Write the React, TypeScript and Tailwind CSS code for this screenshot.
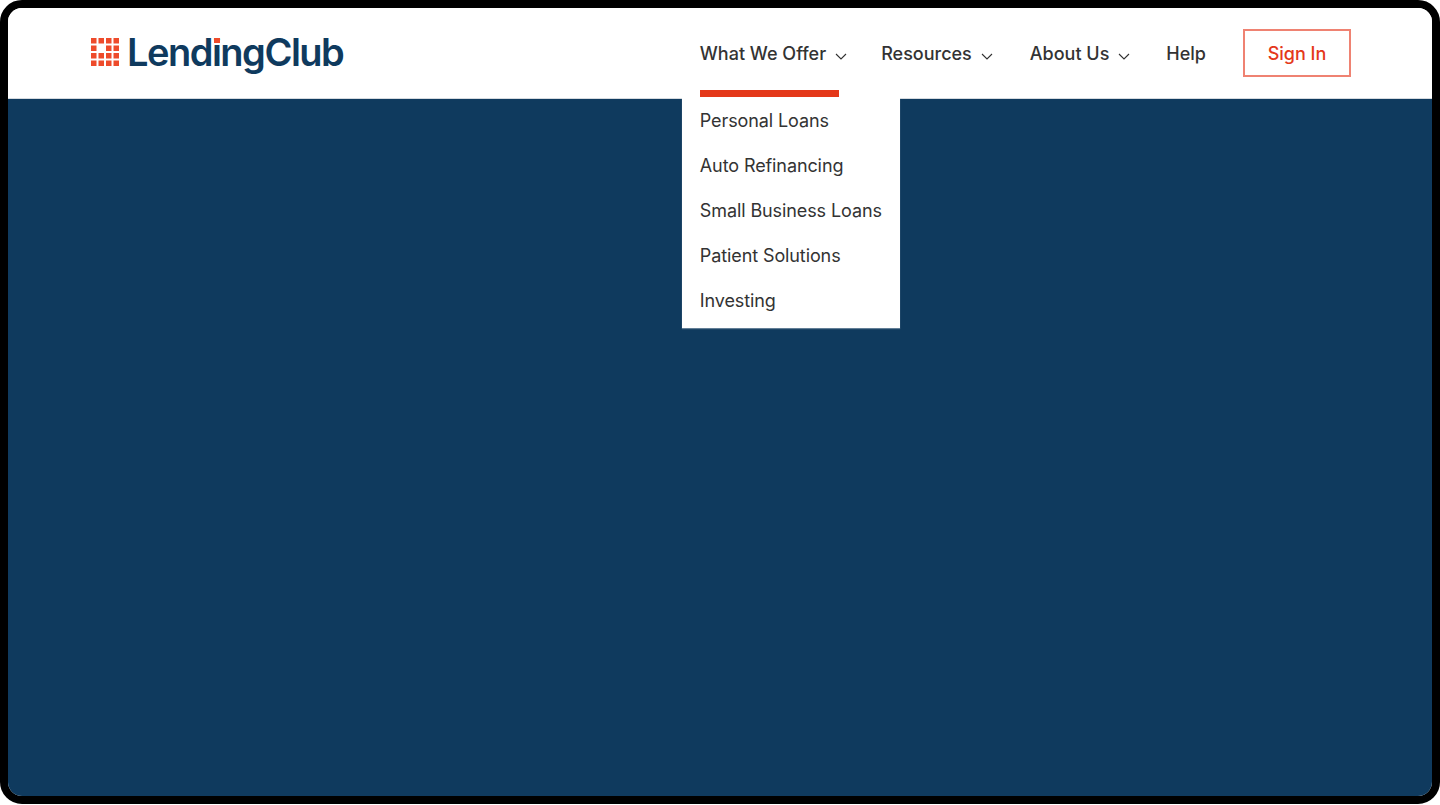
import React from "react";

const menuItems = [
  "Personal Loans",
  "Auto Refinancing",
  "Small Business Loans",
  "Patient Solutions",
  "Investing",
];

// 4x4 grid mark, the second row has a gap in the middle
const LogoMark = () => {
  const cells: [number, number][] = [];
  for (let r = 0; r < 4; r++) {
    for (let c = 0; c < 4; c++) {
      if (r === 1 && c === 1) continue;
      cells.push([c, r]);
    }
  }
  return (
    <svg width="28" height="28" viewBox="0 0 28 28" className="shrink-0">
      {cells.map(([c, r]) => (
        <rect
          key={`${c}-${r}`}
          x={c * 7.5}
          y={r * 7.5}
          width="5.5"
          height="5.5"
          fill="#EE4B2B"
        />
      ))}
    </svg>
  );
};

const Chevron = () => (
  <svg width="12" height="7" viewBox="0 0 12 7" fill="none" className="ml-[9px] mt-[6px]">
    <path d="M1 1l5 5 5-5" stroke="#333" strokeWidth="1.1" />
  </svg>
);

export default function App() {
  return (
    <div className="h-[804px] bg-white font-['Inter',sans-serif]">
      <div className="h-full flex flex-col overflow-hidden border-8 border-black rounded-[22px]">
        <header className="relative z-10 h-[91px] shrink-0 flex items-center justify-between pl-[83px] pr-[81px] bg-white border-b border-[#d5dadf]">
          <div className="relative flex items-center gap-2 -mt-[2px]">
            <LogoMark />
            <span className="text-[38px] leading-none font-semibold tracking-[-1.5px] text-[#0F3A5E]">
              LendingClub
            </span>
            {/* red dot of the i */}
            <span className="absolute left-[123px] top-[-1px] w-[6px] h-[11px] border-t-[6px] border-white bg-[#EE4B2B]" />
          </div>

          <nav className="flex items-center text-[18px] font-medium text-[#333]">
            <div className="relative flex items-center">
              <span>What We Offer</span>
              <Chevron />
              <div className="absolute left-0 top-[50px] w-[139px] h-[7px] bg-[#E4381A] z-10" />
              <ul className="absolute left-[-18px] top-[57px] w-[218px] pt-[1px] pb-[5px] bg-white font-normal tracking-[-0.1px] shadow-[0_1px_1px_rgba(255,255,255,0.35)]">
                {menuItems.map((item) => (
                  <li key={item} className="h-[45px] pl-[18px] flex items-center whitespace-nowrap">
                    {item}
                  </li>
                ))}
              </ul>
            </div>
            <div className="flex items-center ml-[34px]">
              <span>Resources</span>
              <Chevron />
            </div>
            <div className="flex items-center ml-[37px]">
              <span>About Us</span>
              <Chevron />
            </div>
            <span className="ml-[36px]">Help</span>
            <button className="ml-[37px] w-[108px] h-[48px] border-2 border-[#EF8272] text-[#E4381A]">
              Sign In
            </button>
          </nav>
        </header>
        <main className="flex-1 bg-[#0F3A5E]" />
      </div>
    </div>
  );
}
